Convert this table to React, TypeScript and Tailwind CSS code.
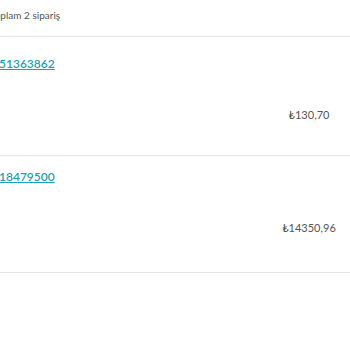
import React from "react";

export default function App() {
  const font = { fontFamily: "Lato, 'Noto Sans', sans-serif" };
  return (
    <div className="w-[350px] h-[350px] overflow-hidden bg-white" style={font}>
      <div className="h-[37px] border-b border-[#e6e6e6] flex items-center">
        <span className="ml-[-10px] text-[10px] leading-[14px] text-[#555] mt-[-6px]">Toplam 2 sipariş</span>
      </div>
      <div className="border-b border-[#e6e6e6] pt-[19px] pb-[32px] flex flex-col">
        <a className="ml-[-1px] text-[12px] leading-[16px] font-semibold text-[#1e9fb3] underline">51363862</a>
        <div className="mt-[35px] flex justify-end">
          <span className="w-[80px] mr-[1px] text-center text-[11px] leading-[16px] text-[#555]">₺130,70</span>
        </div>
      </div>
      <div className="border-b border-[#e6e6e6] pt-[13px] pb-[36px] flex flex-col">
        <a className="ml-[-1px] text-[12px] leading-[16px] font-semibold text-[#1e9fb3] underline">18479500</a>
        <div className="mt-[35px] flex justify-end">
          <span className="w-[80px] mr-[1px] text-center text-[11px] leading-[16px] text-[#555]">₺14350,96</span>
        </div>
      </div>
    </div>
  );
}
